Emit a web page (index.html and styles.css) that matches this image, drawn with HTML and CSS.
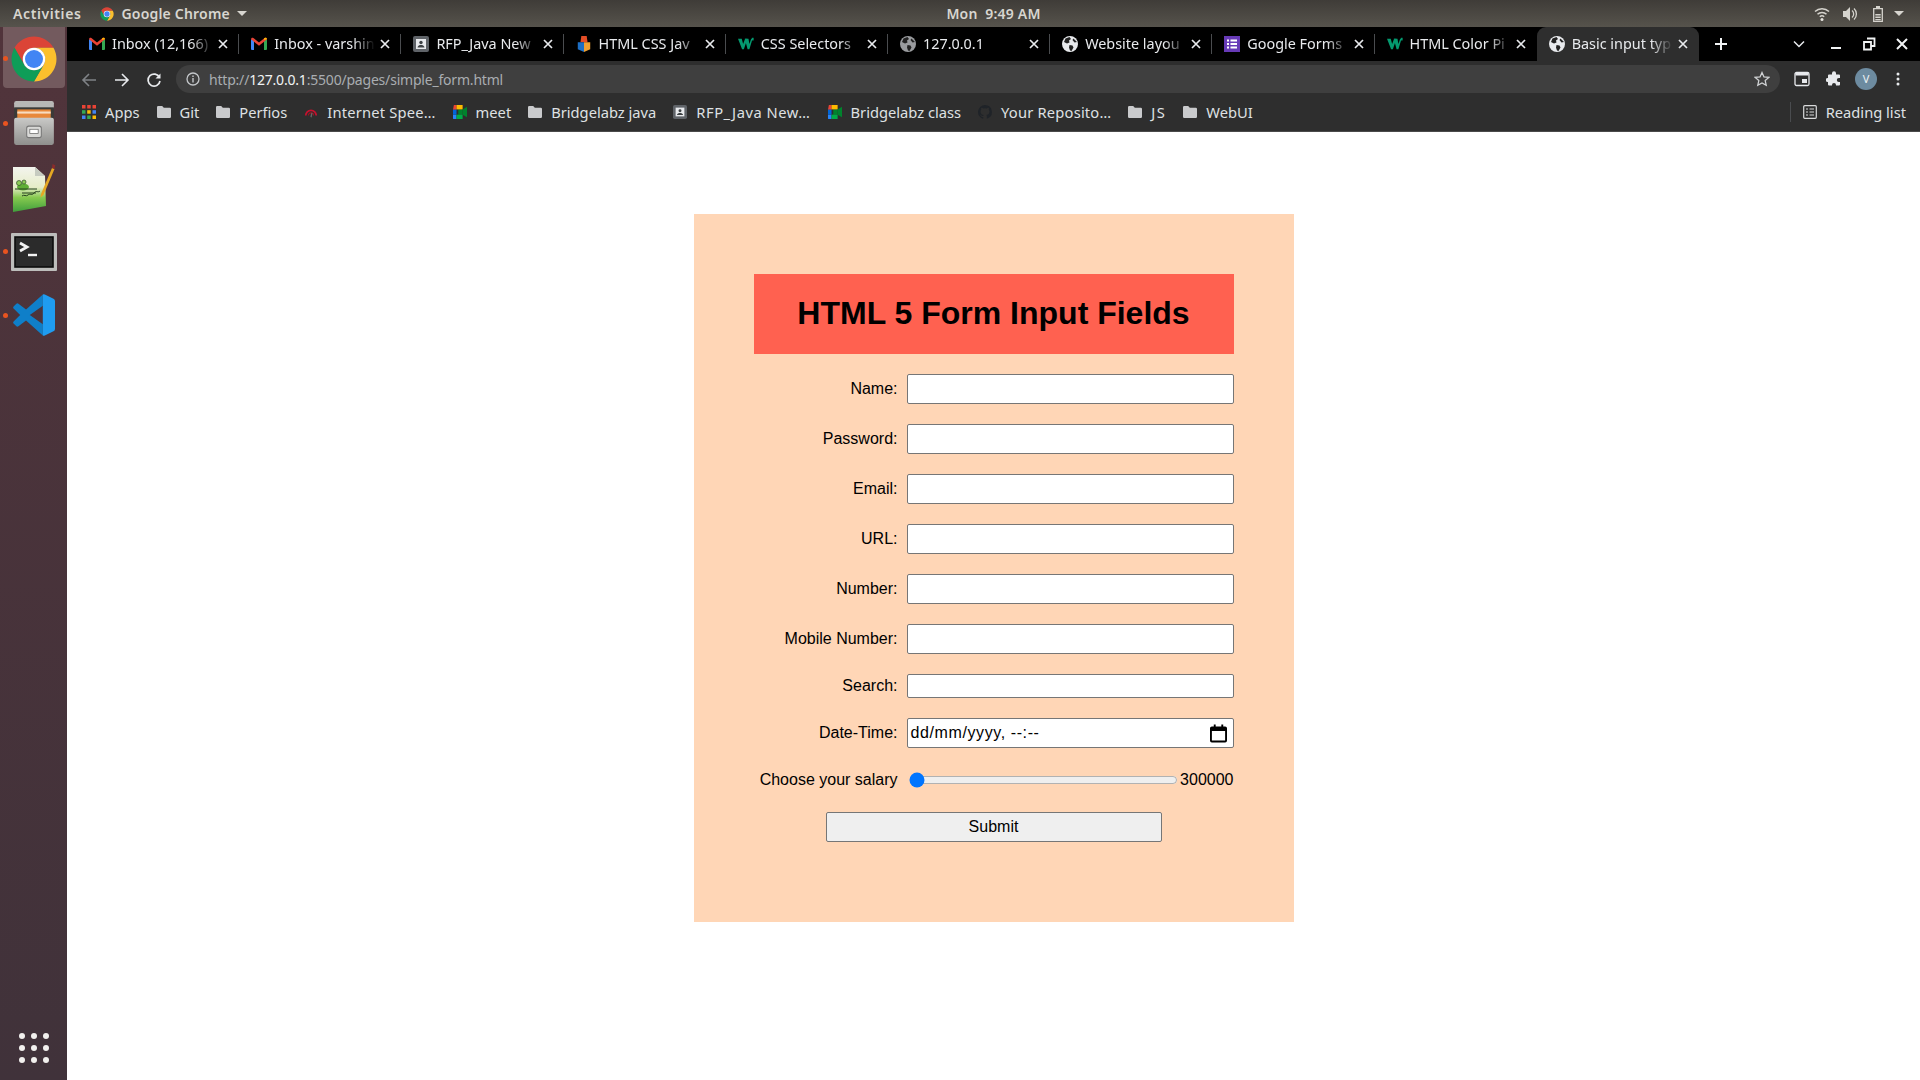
FILE: index.html
```html
<!DOCTYPE html>
<html lang="en">
<head>
<meta charset="utf-8">
<title>Basic input types</title>
<link rel="stylesheet" href="styles.css">
</head>
<body>
<svg class="defs" width="0" height="0" aria-hidden="true">
  <symbol id="chrome" viewBox="0 0 48 48">
    <path fill="#db4437" d="M6.68 14A20 20 0 0 1 41.32 14L24 14A10 10 0 0 0 15.34 29Z"/>
    <path fill="#fbc02d" d="M41.32 14A20 20 0 0 1 24 44L32.66 29A10 10 0 0 0 24 14Z"/>
    <path fill="#0f9d58" d="M24 44A20 20 0 0 1 6.68 14L15.34 29A10 10 0 0 0 32.66 29Z"/>
    <circle cx="24" cy="24" r="10" fill="#fff"/><circle cx="24" cy="24" r="8" fill="#4285f4"/>
  </symbol>
  <symbol id="gmail" viewBox="0 0 16 14">
    <path fill="#4285f4" d="M0 2.2 3 3v10H1a1 1 0 0 1-1-1Z"/>
    <path fill="#34a853" d="M13 3l3-.8V12a1 1 0 0 1-1 1h-2Z"/>
    <path fill="#ea4335" d="M0 2.2C0 .8 1.4.2 2.4 1L8 5.4 13.6 1c1-.8 2.4-.2 2.4 1.200L13 4.800 8 8.700 3 4.800Z"/>
    <path fill="#fbbc04" d="M13 3V1.600l.6-.6C14.600.2 16 .8 16 2.200Z"/>
  </symbol>
  <symbol id="doc" viewBox="0 0 16 16">
    <rect width="16" height="16" rx="2" fill="#5f6368"/>
    <rect x="3" y="3" width="10" height="10" fill="#e8eaed"/>
    <circle cx="8" cy="6.500" r="1.700" fill="#3c4043"/>
    <path fill="#3c4043" d="M4.500 11.500c.3-2 2-2.500 3.500-2.500s3.200.5 3.500 2.500Z"/>
  </symbol>
  <symbol id="layers" viewBox="0 0 16 18">
    <path fill="#e44d26" d="M5 0h6l1 7H4Z"/>
    <path fill="#f0a030" d="M8 7h7v8l-7 3Z"/>
    <path fill="#1e6fc4" d="M1 7h7v11l-7-3Z"/>
  </symbol>
  <symbol id="w3" viewBox="0 0 18 14">
    <path fill="#04996f" d="M0 1h4.200l1.600 6L8 1h2.600l-4 12H4.600Z"/>
    <path fill="#04996f" d="M7.600 1h4.200l1 6 2-6h1.600l-3.600 12h-2Z"/>
    <rect x="15.600" y="0" width="2" height="3" fill="#04996f"/>
  </symbol>
  <symbol id="globe" viewBox="0 0 16 16">
    <circle cx="8" cy="8" r="8" fill="currentColor"/>
    <path fill="#222" d="M3.500 2.500 7.500 1 9 3 7 4.500 7.500 6.500 5 7.500 2 6ZM7.500 9l3 .5 1 2-2 3.500-1.500-.5L7 11.500ZM11.500 2.500 15 6l-2.500.5-2-2.500Z"/>
  </symbol>
  <symbol id="forms" viewBox="0 0 16 16">
    <rect width="16" height="16" fill="#673ab7"/>
    <path fill="#fff" d="M3 3.500h2v2H3Zm3.500 0H13v2H6.500ZM3 7h2v2H3Zm3.500 0H13v2H6.500ZM3 10.500h2v2H3Zm3.500 0H13v2H6.500Z"/>
  </symbol>
  <symbol id="folder" viewBox="0 0 14 12">
    <path fill="#c9cacc" d="M1.200 0h4l1.600 1.800h6A1.200 1.200 0 0 1 14 3v7.800a1.200 1.200 0 0 1-1.200 1.200H1.200A1.200 1.200 0 0 1 0 10.800V1.200A1.200 1.200 0 0 1 1.200 0Z"/>
  </symbol>
  <symbol id="meet" viewBox="0 0 16 16">
    <path fill="#00832d" d="M6 5h5v6H6Z"/><path fill="#0066da" d="M0 5h4v6H0Z"/>
    <path fill="#ea4335" d="M4 0H1L0 5h4Z"/><path fill="#ffba00" d="M4 0h7v5H4Z"/>
    <path fill="#2684fc" d="M0 11h4v5H1a1 1 0 0 1-1-1Z"/><path fill="#00ac47" d="M4 11h7v5H4Z"/>
    <path fill="#00832d" d="m11 5 5-3v12l-5-3Z"/>
  </symbol>
  <symbol id="close" viewBox="0 0 10 10">
    <path stroke="currentColor" stroke-width="1.700" d="m1 1 8 8M9 1 1 9" fill="none"/>
  </symbol>
</svg>

<header class="topbar">
  <div class="top-left">
    <span class="top-text activities">Activities</span>
    <span class="top-app">
      <svg class="i16"><use href="#chrome"/></svg>
      <span class="top-text">Google Chrome</span>
      <span class="caret"></span>
    </span>
  </div>
  <div class="clock top-text">Mon&nbsp; 9:49 AM</div>
  <div class="top-right">
    <svg class="i16" viewBox="0 0 16 16"><path fill="none" stroke="#d5d3cd" stroke-width="1.500" d="M1 5.500a10 10 0 0 1 14 0M3.500 8.300a6.500 6.500 0 0 1 9 0M5.800 10.800a3.200 3.200 0 0 1 4.400 0"/><circle cx="8" cy="13.500" r="1.500" fill="#e6e4de"/></svg>
    <svg class="i16" viewBox="0 0 16 16"><path fill="#d5d3cd" d="M1 5h3l4-4v14l-4-4H1Z"/><path fill="none" stroke="#d5d3cd" stroke-width="1.300" d="M10 4.500a4.500 4.500 0 0 1 0 7M12 2.500a7.500 7.500 0 0 1 0 11"/></svg>
    <svg class="i16" viewBox="0 0 16 16"><path fill="none" stroke="#d5d3cd" stroke-width="1.300" d="M3.700 2.700h8.600v12.600H3.700Z"/><path fill="#d5d3cd" d="M6 0h4v2.500H6ZM5.300 8h5.400v1.500H5.300Zm0 2.500h5.400V12H5.300Zm0 2.500h5.400v1.200H5.300Z"/></svg>
    <span class="caret caret-end"></span>
  </div>
</header>

<div class="desktop">
  <nav class="dock">
    <div class="dock-item active"><span class="run-dot"></span>
      <svg class="dock-chrome"><use href="#chrome"/></svg>
    </div>
    <div class="dock-item"><span class="run-dot"></span>
      <svg class="dock-icon" viewBox="0 0 44 44">
        <defs><linearGradient id="cab" x1="0" y1="0" x2="0" y2="1"><stop offset="0" stop-color="#c9c9c7"/><stop offset="1" stop-color="#8f8f8d"/></linearGradient></defs>
        <path fill="#b8b8b6" d="M3 3a2 2 0 0 1 2-2h34a2 2 0 0 1 2 2v5H3Z"/>
        <rect x="3" y="7" width="38" height="11" fill="#3a3a38"/>
        <rect x="6" y="9" width="32" height="9" fill="#e8883a"/>
        <rect x="6" y="11" width="32" height="2" fill="#f7dcc0"/>
        <rect x="3" y="17" width="38" height="26" rx="2" fill="url(#cab)"/>
        <rect x="15" y="25" width="14" height="11" rx="2" fill="#d9d9d7" stroke="#777" stroke-width="1"/>
        <rect x="18" y="28" width="8" height="4" fill="#fff" stroke="#666" stroke-width=".7"/>
      </svg>
    </div>
    <div class="dock-item">
      <svg class="dock-note" viewBox="0 0 44 50">
        <defs><linearGradient id="pad" x1="0" y1="0" x2="0" y2="1"><stop offset="0" stop-color="#f3f4ee"/><stop offset=".45" stop-color="#e6edc8"/><stop offset=".68" stop-color="#86c94f"/><stop offset="1" stop-color="#3f9e3c"/></linearGradient></defs>
        <path fill="url(#pad)" d="M1 5h22l10 9 1 30-33 6Z"/>
        <path fill="#c6cbc0" d="M23 5v9h10Z"/>
        <ellipse cx="11" cy="25" rx="6" ry="3.500" fill="#5fae36"/>
        <circle cx="7" cy="21" r="2.500" fill="#8ccd56" stroke="#2f4a2a" stroke-width=".7"/>
        <circle cx="12" cy="20" r="2" fill="#8ccd56" stroke="#2f4a2a" stroke-width=".7"/>
        <path stroke="#26401f" stroke-width="1" fill="none" d="M3 27h22M10 31h14M10 34c2-2 4 1 6-1s4 1 6-2 4 0 6-2"/>
        <path fill="#e5a823" d="m29 32 11-26 2.500 1-11 26-3 2.500Z"/>
        <path fill="#8a2c2c" d="m40.500 2 2.800 1.200-.8 3.800-2.500-1Z"/>
      </svg>
    </div>
    <div class="dock-item"><span class="run-dot"></span>
      <svg class="dock-icon" viewBox="0 0 46 46">
        <rect x="0" y="5" width="46" height="38" rx="1" fill="#bdbdbb"/>
        <rect x="4" y="9" width="38" height="30" fill="#2b2b2b" stroke="#0c0c0c" stroke-width="1.600"/>
        <path fill="none" stroke="#f2f2f2" stroke-width="2.800" d="m9 15 7 4-7 4"/>
        <path stroke="#f2f2f2" stroke-width="2.400" d="M17 27h9"/>
      </svg>
    </div>
    <div class="dock-item"><span class="run-dot"></span>
      <svg class="dock-vs" viewBox="0 0 100 100">
        <path fill="#0f7fc9" d="M71 1 31 37 13 23a4 4 0 0 0-5 .2L2 29a4 4 0 0 0 0 6l15 15L2 65a4 4 0 0 0 0 6l6 5.600a4 4 0 0 0 5 .2L31 63l40 36V72L40 50l31-22Z"/>
        <path fill="#1f9cf0" d="M71 99a6 6 0 0 0 4.800-.2l20.600-9.900a6.200 6.200 0 0 0 3.600-5.600V16.700a6.200 6.200 0 0 0-3.600-5.600L75.800 1.200A6 6 0 0 0 71 1Z"/>
      </svg>
    </div>
    <div class="dock-apps">
      <svg class="apps-grid" viewBox="0 0 32 32" fill="#f2f0ee">
        <circle cx="4" cy="4" r="3"/><circle cx="16" cy="4" r="3"/><circle cx="28" cy="4" r="3"/>
        <circle cx="4" cy="16" r="3"/><circle cx="16" cy="16" r="3"/><circle cx="28" cy="16" r="3"/>
        <circle cx="4" cy="28" r="3"/><circle cx="16" cy="28" r="3"/><circle cx="28" cy="28" r="3"/>
      </svg>
    </div>
  </nav>

  <div class="browser">
    <div class="tabstrip">
      <div class="tab sep"><svg class="fav"><use href="#gmail"/></svg><span class="tab-title">Inbox (12,166)</span><svg class="x"><use href="#close"/></svg></div>
      <div class="tab sep"><svg class="fav"><use href="#gmail"/></svg><span class="tab-title">Inbox - varshin</span><svg class="x"><use href="#close"/></svg></div>
      <div class="tab sep"><svg class="fav"><use href="#doc"/></svg><span class="tab-title">RFP_Java New</span><svg class="x"><use href="#close"/></svg></div>
      <div class="tab sep"><svg class="fav"><use href="#layers"/></svg><span class="tab-title">HTML CSS Jav</span><svg class="x"><use href="#close"/></svg></div>
      <div class="tab sep"><svg class="fav"><use href="#w3"/></svg><span class="tab-title">CSS Selectors</span><svg class="x"><use href="#close"/></svg></div>
      <div class="tab sep"><svg class="fav dim"><use href="#globe"/></svg><span class="tab-title">127.0.0.1</span><svg class="x"><use href="#close"/></svg></div>
      <div class="tab sep"><svg class="fav"><use href="#globe"/></svg><span class="tab-title">Website layou</span><svg class="x"><use href="#close"/></svg></div>
      <div class="tab sep"><svg class="fav"><use href="#forms"/></svg><span class="tab-title">Google Forms</span><svg class="x"><use href="#close"/></svg></div>
      <div class="tab"><svg class="fav"><use href="#w3"/></svg><span class="tab-title">HTML Color Pi</span><svg class="x"><use href="#close"/></svg></div>
      <div class="tab active"><svg class="fav"><use href="#globe"/></svg><span class="tab-title">Basic input typ</span><svg class="x"><use href="#close"/></svg></div>
      <svg class="plus" viewBox="0 0 14 14"><path stroke="#f1f3f4" stroke-width="2" d="M7 1v12M1 7h12"/></svg>
      <div class="window-ctl">
        <svg class="ctl ctl-list" viewBox="0 0 14 14"><path fill="none" stroke="#e8eaed" stroke-width="1.500" d="m2 4.500 5 5 5-5"/></svg>
        <svg class="ctl" viewBox="0 0 14 14"><path stroke="#f1f3f4" stroke-width="2" d="M2 11h10"/></svg>
        <svg class="ctl" viewBox="0 0 14 14"><path fill="none" stroke="#f1f3f4" stroke-width="1.800" d="M5 1.500h7.500V9H9M2 5h7v7.500H2Z"/></svg>
        <svg class="ctl" viewBox="0 0 14 14"><path stroke="#f1f3f4" stroke-width="2" d="m2 2 10 10M12 2 2 12"/></svg>
      </div>
    </div>

    <div class="toolbar">
      <svg class="tool" viewBox="0 0 16 16"><path fill="none" stroke="#7f8286" stroke-width="1.600" d="M15 8H2M8 2 2 8l6 6"/></svg>
      <svg class="tool" viewBox="0 0 16 16"><path fill="none" stroke="#e8eaed" stroke-width="1.600" d="M1 8h13M8 2l6 6-6 6"/></svg>
      <svg class="tool" viewBox="0 0 16 16"><path fill="none" stroke="#e8eaed" stroke-width="1.700" d="M13.500 5.500A6 6 0 1 0 14 9"/><path fill="#e8eaed" d="M14.500 1.500v5h-5Z"/></svg>
      <div class="omnibox">
        <svg class="info" viewBox="0 0 14 14"><circle cx="7" cy="7" r="6" fill="none" stroke="#c4c7ca" stroke-width="1.300"/><path fill="#c4c7ca" d="M6.300 6h1.400v4.500H6.300Zm0-2.500h1.400V5H6.300Z"/></svg>
        <span class="url"><span class="url-dim">http://</span><span class="url-host">127.0.0.1</span><span class="url-dim">:5500/pages/simple_form.html</span></span>
        <svg class="star" viewBox="0 0 16 16"><path fill="none" stroke="#d0d2d4" stroke-width="1.300" d="m8 1.500 2 4.400 4.800.5-3.600 3.200 1 4.700L8 11.900l-4.200 2.400 1-4.700-3.600-3.200L6 5.900Z"/></svg>
      </div>
      <div class="tool-right">
        <svg class="tool" viewBox="0 0 16 16"><rect x="1" y="1.500" width="14" height="13" rx="1.500" fill="#2e2e2e" stroke="#e8eaed" stroke-width="1.300"/><rect x="1.500" y="2" width="13" height="2.500" fill="#e8eaed"/><rect x="8" y="8" width="5" height="4" fill="#e8eaed"/></svg>
        <svg class="tool" viewBox="0 0 16 16"><path fill="#e8eaed" d="M6 2.200a2 2 0 0 1 4 0V3.500h3a1 1 0 0 1 1 1V7h-1.200a2 2 0 0 0 0 4H14v2.500a1 1 0 0 1-1 1H10V14a2 2 0 0 0-4 0v.5H3a1 1 0 0 1-1-1V11h-.3a2 2 0 0 1 0-4H2V4.500a1 1 0 0 1 1-1h3Z"/></svg>
        <span class="avatar">V</span>
        <svg class="tool" viewBox="0 0 16 16" fill="#e8eaed"><circle cx="8" cy="3" r="1.500"/><circle cx="8" cy="8" r="1.500"/><circle cx="8" cy="13" r="1.500"/></svg>
      </div>
    </div>

    <div class="bookmarks">
      <span class="bm bm-apps"><svg class="bm-ic" viewBox="0 0 14 14">
        <rect x="0" y="0" width="3.500" height="3.500" fill="#ea4335"/><rect x="5.200" y="0" width="3.500" height="3.500" fill="#ea4335"/><rect x="10.500" y="0" width="3.500" height="3.500" fill="#ea4335"/>
        <rect x="0" y="5.200" width="3.500" height="3.500" fill="#34a853"/><rect x="5.200" y="5.200" width="3.500" height="3.500" fill="#fbbc04"/><rect x="10.500" y="5.200" width="3.500" height="3.500" fill="#4285f4"/>
        <rect x="0" y="10.500" width="3.500" height="3.500" fill="#4285f4"/><rect x="5.200" y="10.500" width="3.500" height="3.500" fill="#34a853"/><rect x="10.500" y="10.500" width="3.500" height="3.500" fill="#fbbc04"/>
      </svg>Apps</span>
      <span class="bm"><svg class="bm-ic"><use href="#folder"/></svg>Git</span>
      <span class="bm"><svg class="bm-ic"><use href="#folder"/></svg>Perfios</span>
      <span class="bm bm-s1"><svg class="bm-ic" viewBox="0 0 16 14"><path fill="none" stroke="#c8102e" stroke-width="2" d="M2 11a6 6 0 0 1 12 0"/><path fill="none" stroke="#a01020" stroke-width="1.200" d="M5 11a3 3 0 0 1 6 0"/><path stroke="#666" stroke-width="1.500" d="m8 13 1-5"/></svg>Internet Spee…</span>
      <span class="bm"><svg class="bm-ic"><use href="#meet"/></svg>meet</span>
      <span class="bm"><svg class="bm-ic"><use href="#folder"/></svg>Bridgelabz java</span>
      <span class="bm bm-s2"><svg class="bm-ic"><use href="#doc"/></svg>RFP_Java New…</span>
      <span class="bm"><svg class="bm-ic"><use href="#meet"/></svg>Bridgelabz class</span>
      <span class="bm bm-s1"><svg class="bm-ic" viewBox="0 0 16 16"><path fill="#1f2328" d="M8 0a8 8 0 0 0-2.500 15.600c.4 0 .5-.2.500-.4v-1.500c-2.200.5-2.700-1-2.700-1-.4-.9-.9-1.200-.9-1.200-.7-.5 0-.5 0-.5.800 0 1.200.8 1.200.8.700 1.200 1.900.9 2.400.7 0-.5.300-.9.500-1.100-1.800-.2-3.600-.9-3.600-4 0-.9.300-1.600.8-2.100 0-.2-.4-1 .1-2.100 0 0 .7-.2 2.200.8a7.600 7.600 0 0 1 4 0c1.500-1 2.200-.8 2.200-.8.500 1.100.1 1.900.1 2.100.5.500.8 1.200.8 2.100 0 3.100-1.900 3.800-3.600 4 .3.200.6.700.6 1.500v2.200c0 .2.100.5.500.4A8 8 0 0 0 8 0Z"/></svg>Your Reposito…</span>
      <span class="bm bm-s3"><svg class="bm-ic"><use href="#folder"/></svg>JS</span>
      <span class="bm"><svg class="bm-ic"><use href="#folder"/></svg>WebUI</span>
      <span class="reading"><svg class="bm-ic" viewBox="0 0 14 14"><rect x=".7" y=".7" width="12.600" height="12.600" rx="1" fill="none" stroke="#d8d9da" stroke-width="1.200"/><path stroke="#d8d9da" stroke-width="1.200" d="M3 4h2M3 7h2M3 10h2M6.500 4H11M6.500 7H11M6.500 10H11"/></svg>Reading list</span>
    </div>

    <main class="page">
      <form class="card">
        <h1 class="title">HTML 5 Form Input Fields</h1>
        <div class="row"><label class="lbl">Name:</label><input class="field" type="text"></div>
        <div class="row"><label class="lbl">Password:</label><input class="field" type="password"></div>
        <div class="row"><label class="lbl">Email:</label><input class="field" type="email"></div>
        <div class="row"><label class="lbl">URL:</label><input class="field" type="url"></div>
        <div class="row"><label class="lbl">Number:</label><input class="field" type="text"></div>
        <div class="row"><label class="lbl">Mobile Number:</label><input class="field" type="tel"></div>
        <div class="row"><label class="lbl">Search:</label><input class="field field-search" type="text"></div>
        <div class="row"><label class="lbl">Date-Time:</label>
          <div class="field field-date"><span class="date-text">dd/mm/yyyy, --:--</span>
            <svg class="cal" viewBox="0 0 18 20"><path fill="none" stroke="#000" stroke-width="2" d="M2 4h14a1 1 0 0 1 1 1v13a1 1 0 0 1-1 1H2a1 1 0 0 1-1-1V5a1 1 0 0 1 1-1Z"/><path fill="#000" d="M1 4h16v4H1ZM4 1h2v3H4Zm8 0h2v3h-2Z"/></svg>
          </div>
        </div>
        <div class="row"><label class="lbl">Choose your salary</label>
          <div class="range-wrap"><input class="range" type="range" min="300000" max="2000000" value="300000"><span>300000</span></div>
        </div>
        <button class="submit" type="button">Submit</button>
      </form>
    </main>
  </div>
</div>
</body>
</html>
```

FILE: styles.css
```css
* { box-sizing: border-box; }
html, body { margin: 0; height: 100%; overflow: hidden; }
body { display: flex; flex-direction: column; background: #fff; font-family: "Liberation Sans", Arial, sans-serif; }
.defs { position: absolute; }
.i16 { width: 16px; height: 16px; flex: none; }

/* top bar */
.topbar { height: 27px; flex: none; display: flex; align-items: center; position: relative; padding: 0 16px 0 13px;
  background: linear-gradient(#3f3c38, #56534c); }
.top-text { font: 600 14px "Noto Sans", sans-serif; color: #d8d6d0; letter-spacing: .2px; white-space: nowrap; }
.activities { letter-spacing: .6px; }
.top-left { display: flex; align-items: center; gap: 18px; }
.top-app { display: flex; align-items: center; gap: 6px; }
.caret { width: 0; height: 0; border: 5px solid transparent; border-top: 5px solid #d8d6d0; border-bottom: 0; margin-left: 1px; }
.caret-end { margin-left: -4px; }
.clock { position: absolute; left: 67px; right: 0; text-align: center; }
.top-right { margin-left: auto; display: flex; align-items: center; gap: 12px; }

/* desktop */
.desktop { flex: 1; display: flex; min-height: 0; }
.dock { width: 67px; flex: none; display: flex; flex-direction: column; align-items: center;
  background: linear-gradient(#51343b, #40323a); }
.dock-item { width: 62px; height: 64px; display: flex; align-items: center; justify-content: center; position: relative; border-radius: 4px; flex: none; }
.dock-item.active { height: 61px; padding-top: 3px; background: #735a5e; margin-bottom: 3px; border-radius: 0 0 4px 4px; }
.dock-chrome { width: 54px; height: 54px; }
.dock-icon { width: 46px; height: 46px; }
.dock-note { width: 44px; height: 50px; }
.dock-vs { width: 42px; height: 42px; }
.run-dot { position: absolute; left: 0; top: 50%; width: 5px; height: 5px; margin-top: -2px; border-radius: 50%; background: #e95420; }
.dock-apps { margin-top: auto; height: 64px; display: flex; align-items: center; }
.apps-grid { width: 32px; height: 32px; }

/* browser */
.browser { flex: 1; min-width: 0; display: flex; flex-direction: column; }
.tabstrip { height: 34px; flex: none; background: #000; display: flex; align-items: center; padding-left: 10px; position: relative; }
.tab { width: 162.200px; height: 34px; flex: none; display: flex; align-items: center; padding: 0 8px 0 12px; position: relative; color: #e8eaed; }
.tab.sep::after { content: ""; position: absolute; right: 0; top: 7px; height: 20px; width: 1px; background: #4a4c4f; }
.tab.active { background: #2e2e2e; border-radius: 9px 9px 0 0; }
.fav { width: 16px; height: 16px; flex: none; margin-right: 7px; color: #e8eaed; }
.fav.dim { color: #9a9c9f; }
.tab-title { flex: 1; min-width: 0; white-space: nowrap; font: 14.400px/34px "Noto Sans", sans-serif;
  -webkit-mask-image: linear-gradient(90deg, #000 calc(100% - 22px), transparent 100%); mask-image: linear-gradient(90deg, #000 calc(100% - 22px), transparent 100%); }
.x { width: 10px; height: 10px; flex: none; margin: 0 3px 0 5px; color: #e8eaed; }
.plus { width: 14px; height: 14px; flex: none; margin-left: 15px; }
.window-ctl { margin-left: auto; display: flex; gap: 19px; padding-right: 11px; }
.ctl { width: 14px; height: 14px; }
.ctl-list { margin-right: 4px; }

.toolbar { height: 38px; flex: none; background: #2e2e2e; display: flex; align-items: center; padding: 0 14px 0 14px; }
.tool { width: 16px; height: 16px; flex: none; }
.toolbar > .tool { margin-right: 17px; }
.toolbar > .tool:nth-child(3) { margin-right: 14px; margin-left: -1px; }
.omnibox { flex: 1; height: 28px; margin-top: -2px; background: #3f3f3f; border-radius: 14px; display: flex; align-items: center; padding: 0 10px 0 10px; }
.info { width: 14px; height: 14px; flex: none; margin-right: 9px; }
.url { font: 14px "Noto Sans", sans-serif; letter-spacing: -.2px; white-space: nowrap; }
.url-dim { color: #a9adb1; }
.url-host { color: #f1f3f4; }
.star { width: 16px; height: 16px; margin-left: auto; }
.tool-right { display: flex; align-items: center; gap: 16px; margin-left: 14px; margin-top: -2px; }
.avatar { width: 22px; height: 22px; border-radius: 50%; background: #6d8ba0; color: #eef2f5; font: 11px/22px "Noto Sans", sans-serif; text-align: center; margin: 0 -3px; }

.bookmarks { height: 33px; flex: none; background: #2e2e2e; border-bottom: 1px solid #4a4a4a; display: flex; align-items: center; padding: 0 14px 6px 15px; gap: 17px; }
.bm, .reading { display: flex; align-items: center; gap: 9px; font: 14.700px "Noto Sans", sans-serif; color: #dfe1e3; white-space: nowrap; }
.bm-s1 { letter-spacing: .2px; }
.bm-s2 { letter-spacing: .55px; }
.bm-s3 { letter-spacing: 1.500px; }
.bm-ic { width: 14px; height: 14px; flex: none; }
.reading { margin-left: auto; padding-left: 12px; border-left: 1px solid #4a4c4f; }

/* page */
.page { flex: 1; min-height: 0; background: #fff; display: flex; justify-content: center; align-items: flex-start; padding-top: 82px; }
.card { width: 600px; padding: 60px 60px 80px; background: #ffd6b6; display: flex; flex-direction: column; gap: 20px; }
.title { margin: 0; height: 80px; padding-bottom: 2px; background: #ff6150; color: #000; display: flex; align-items: center; justify-content: center; font: bold 32px "Liberation Sans", Arial, sans-serif; }
.row { display: flex; align-items: center; gap: 9px; font-size: 16px; color: #000; }
.lbl { width: 144px; flex: none; text-align: right; white-space: nowrap; }
.field { width: 327px; height: 30px; flex: none; margin: 0; padding: 1px 3px; background: #fff; border: 1px solid #767676; border-radius: 2px; font: 16px "Liberation Sans", Arial, sans-serif; }
.field-search { height: 24px; }
.field-date { display: flex; align-items: center; justify-content: space-between; color: #000; padding-right: 6px; }
.date-text { letter-spacing: .6px; }
.cal { width: 17px; height: 20px; flex: none; }
.range-wrap { width: 327px; height: 24px; display: flex; align-items: center; justify-content: space-between; }
.range { width: 270px; margin: 2px; accent-color: #0075ff; }
.submit { width: 336px; height: 30px; align-self: center; margin: 0; background: #efefef; border: 1px solid #767676; border-radius: 2px; font: 16px "Liberation Sans", Arial, sans-serif; color: #000; }
```
